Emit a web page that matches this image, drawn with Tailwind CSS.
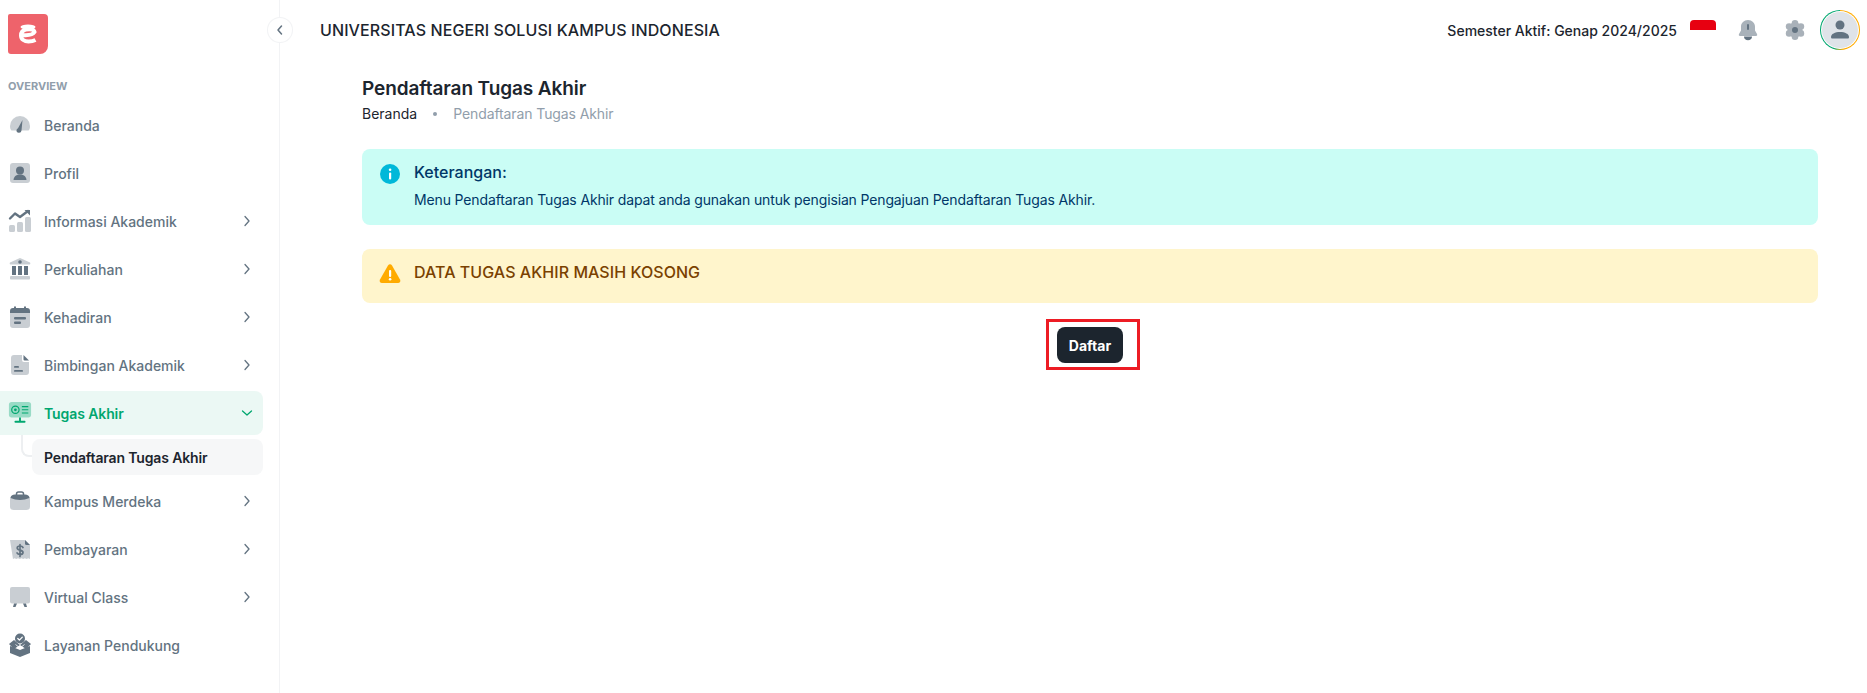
<!DOCTYPE html>
<html lang="en">
<head>
<meta charset="UTF-8" />
<title>Pendaftaran Tugas Akhir</title>
<script src="https://cdn.jsdelivr.net/npm/@tailwindcss/browser@4"></script>
</head>
<body class="bg-white font-['Inter',sans-serif] text-[#1c252e]">
<div class="flex h-[693px] w-[1867px] overflow-hidden">

  <!-- sidebar -->
  <aside class="relative w-[280px] shrink-0 border-r border-[#919eab1f] pt-[14px]">
    <div class="ml-[8px] h-[40px] w-[40px] rounded-tl-[2px] rounded-tr-[4px] rounded-br-[8px] rounded-bl-[3px] bg-[#ee636b]">
      <svg width="40" height="40" viewBox="0 0 40 40"><ellipse cx="20" cy="13" rx="7.500" ry="2.400" fill="#fff"/><path d="M14.500 21C20 21.500 25 20.500 26.500 18 26 15.500 22 15 18 15.500 14 16.500 13 19 13 21.500 13 25.500 16.500 27.500 20.500 27.500 23 27.500 25.500 27 27.500 26" fill="none" stroke="#fff" stroke-width="4"/></svg>
    </div>
    <div class="absolute top-[17px] right-[-14px] flex h-[26px] w-[26px] items-center justify-center rounded-full border border-[#919eab1f] bg-white">
      <svg width="12" height="12" viewBox="0 0 12 12" fill="none" stroke="#637381" stroke-width="1.500" stroke-linecap="round" stroke-linejoin="round"><path d="M7.500 2 4 6l3.500 4"/></svg>
    </div>
    <div class="mt-[25px] ml-[8px] h-[14px] text-[11px] leading-[14px] font-bold text-[#919eab]">OVERVIEW</div>

    <nav class="mt-[8px] flex flex-col text-[14px] font-medium text-[#637381]">
      <a class="flex h-[48px] items-center pl-[8px]">
        <svg class="mr-[12px] shrink-0" width="24" height="24" viewBox="0 0 24 24"><path d="M2 13a10 10 0 0 1 20 0c0 2-.5 4-1.500 4.500h-17C2.500 17 2 15 2 13z" fill="#637381" opacity=".35"/><path d="M14.500 7 13.500 17.500a2.500 2.500 0 1 1-5-.5c.2-.8.8-1.300 1.500-1.700z" fill="#637381"/></svg>
        <span>Beranda</span>
      </a>
      <a class="flex h-[48px] items-center pl-[8px]">
        <svg class="mr-[12px] shrink-0" width="24" height="24" viewBox="0 0 24 24"><rect x="2" y="2" width="20" height="20" rx="3" fill="#637381" opacity=".35"/><circle cx="12" cy="9.500" r="4" fill="#637381"/><path d="M5.500 19c.5-4 3-5.500 6.500-5.500s6 1.500 6.500 5.500z" fill="#637381"/></svg>
        <span>Profil</span>
      </a>
      <a class="flex h-[48px] items-center pl-[8px]">
        <svg class="mr-[12px] shrink-0" width="24" height="24" viewBox="0 0 24 24"><rect x="1" y="16" width="6" height="7" rx="1.500" fill="#637381" opacity=".35"/><rect x="9" y="13" width="6" height="10" rx="1.500" fill="#637381" opacity=".35"/><rect x="17" y="8" width="6" height="15" rx="1.500" fill="#637381" opacity=".35"/><path d="M2 9.500 7 4.500l5 3.500 8-6" fill="none" stroke="#637381" stroke-width="2.400" stroke-linecap="round" stroke-linejoin="round"/><path d="M16.500 1H22V6.500z" fill="#637381"/></svg>
        <span>Informasi Akademik</span>
        <svg class="mr-[26px] ml-auto" width="12" height="12" viewBox="0 0 12 12" fill="none" stroke="#637381" stroke-width="1.300" stroke-linecap="round" stroke-linejoin="round"><path d="m4 1.500 4 4.500-4 4.500"/></svg>
      </a>
      <a class="flex h-[48px] items-center pl-[8px]">
        <svg class="mr-[12px] shrink-0" width="24" height="24" viewBox="0 0 24 24"><path d="M12 1 22 5.500c.5.300.5 2-.5 2h-19c-1 0-1-1.700-.5-2z" fill="#637381" opacity=".35"/><circle cx="12" cy="5" r="1.800" fill="#637381"/><rect x="4" y="9" width="4" height="9" fill="#637381"/><rect x="10" y="9" width="4" height="9" fill="#637381"/><rect x="16" y="9" width="4" height="9" fill="#637381"/><rect x="2" y="19" width="20" height="3.500" rx="1" fill="#637381" opacity=".35"/></svg>
        <span>Perkuliahan</span>
        <svg class="mr-[26px] ml-auto" width="12" height="12" viewBox="0 0 12 12" fill="none" stroke="#637381" stroke-width="1.300" stroke-linecap="round" stroke-linejoin="round"><path d="m4 1.500 4 4.500-4 4.500"/></svg>
      </a>
      <a class="flex h-[48px] items-center pl-[8px]">
        <svg class="mr-[12px] shrink-0" width="24" height="24" viewBox="0 0 24 24"><path d="M2 8h20v12a3 3 0 0 1-3 3H5a3 3 0 0 1-3-3z" fill="#637381" opacity=".35"/><path d="M2 8V6a3 3 0 0 1 3-3h1V1.500h2V3h8V1.500h2V3h1a3 3 0 0 1 3 3v2z" fill="#637381"/><rect x="6" y="12" width="12" height="2.500" rx="1" fill="#637381"/><rect x="6" y="16.500" width="7" height="2.500" rx="1" fill="#637381"/></svg>
        <span>Kehadiran</span>
        <svg class="mr-[26px] ml-auto" width="12" height="12" viewBox="0 0 12 12" fill="none" stroke="#637381" stroke-width="1.300" stroke-linecap="round" stroke-linejoin="round"><path d="m4 1.500 4 4.500-4 4.500"/></svg>
      </a>
      <a class="flex h-[48px] items-center pl-[8px]">
        <svg class="mr-[12px] shrink-0" width="24" height="24" viewBox="0 0 24 24"><path d="M6 2h8v5a2 2 0 0 0 2 2h5v10a3 3 0 0 1-3 3H6a3 3 0 0 1-3-3V5a3 3 0 0 1 3-3z" fill="#637381" opacity=".35"/><path d="M15.500 2 21 7.500h-4.500a1 1 0 0 1-1-1z" fill="#637381"/><rect x="6" y="13" width="5" height="1.800" rx=".9" fill="#637381"/><rect x="6" y="17" width="9" height="1.800" rx=".9" fill="#637381"/></svg>
        <span>Bimbingan Akademik</span>
        <svg class="mr-[26px] ml-auto" width="12" height="12" viewBox="0 0 12 12" fill="none" stroke="#637381" stroke-width="1.300" stroke-linecap="round" stroke-linejoin="round"><path d="m4 1.500 4 4.500-4 4.500"/></svg>
      </a>

      <a class="mt-[2px] flex h-[44px] w-[263px] items-center rounded-r-[8px] bg-[#00a76f14] pl-[8px] font-semibold tracking-[-0.1px] text-[#00a76f]">
        <svg class="mr-[12px] shrink-0" width="24" height="24" viewBox="0 0 26 26"><rect x="1" y="1" width="24" height="17" rx="3" fill="#00a76f" opacity=".35"/><circle cx="8" cy="9.500" r="4" fill="none" stroke="#00a76f" stroke-width="1.300"/><circle cx="8" cy="9.500" r="1.500" fill="#00a76f"/><path d="M15 6h7M15 9.500h7M15 13h7" stroke="#00a76f" stroke-width="1.300"/><path d="M13 18v4" stroke="#00a76f" stroke-width="2"/><rect x="7" y="21.500" width="12" height="2" rx="1" fill="#00a76f"/></svg>
        <span>Tugas Akhir</span>
        <svg class="mr-[10px] ml-auto" width="12" height="12" viewBox="0 0 12 12" fill="none" stroke="#00a76f" stroke-width="1.300" stroke-linecap="round" stroke-linejoin="round"><path d="m1.500 4 4.500 4 4.500-4"/></svg>
      </a>
      <div class="relative mt-[4px] mb-[2px] ml-[32px] flex h-[36px] w-[231px] items-center rounded-[8px] bg-[#919eab14] pl-[12px] font-semibold tracking-[-0.15px] text-[#1c252e]">
        <span class="absolute top-[-4px] left-[-11px] h-[22px] w-[11px] rounded-bl-[8px] border-b-2 border-l-2 border-[#edeff1]"></span>
        Pendaftaran Tugas Akhir
      </div>

      <a class="flex h-[48px] items-center pl-[8px]">
        <svg class="mr-[12px] shrink-0" width="24" height="24" viewBox="0 0 24 24"><rect x="2" y="7" width="20" height="14" rx="3.500" fill="#637381" opacity=".35"/><path d="M8.500 6V5a2 2 0 0 1 2-2h3a2 2 0 0 1 2 2v1" fill="none" stroke="#637381" stroke-width="1.500"/><path d="M2.500 9c0-2 2-3.500 4.500-3.500h10c2.500 0 4.500 1.500 4.500 3.500-6 2.500-13 2.500-19 0z" fill="#637381"/></svg>
        <span>Kampus Merdeka</span>
        <svg class="mr-[26px] ml-auto" width="12" height="12" viewBox="0 0 12 12" fill="none" stroke="#637381" stroke-width="1.300" stroke-linecap="round" stroke-linejoin="round"><path d="m4 1.500 4 4.500-4 4.500"/></svg>
      </a>
      <a class="flex h-[48px] items-center pl-[8px]">
        <svg class="mr-[12px] shrink-0" width="24" height="24" viewBox="0 0 24 24"><path d="M2 3h15l5 5v14l-1.700-.8-1.700.8-1.700-.8-1.700.8-1.700-.8-1.800.8-1.700-.8-1.700.8-1.700-.8-1.600.8z" fill="#637381" opacity=".35"/><path d="M17 3 22 8h-3.500a1.500 1.500 0 0 1-1.500-1.500z" fill="#637381"/><path d="M15 10.500c-.5-1-1.500-1.500-3-1.500-1.800 0-2.800.8-2.800 2 0 2.800 5.800 1.400 5.800 4.400 0 1.200-1.100 2-3 2-1.500 0-2.500-.5-3-1.500M12 7.500v12" fill="none" stroke="#637381" stroke-width="1.700" stroke-linecap="round"/></svg>
        <span>Pembayaran</span>
        <svg class="mr-[26px] ml-auto" width="12" height="12" viewBox="0 0 12 12" fill="none" stroke="#637381" stroke-width="1.300" stroke-linecap="round" stroke-linejoin="round"><path d="m4 1.500 4 4.500-4 4.500"/></svg>
      </a>
      <a class="flex h-[48px] items-center pl-[8px]">
        <svg class="mr-[12px] shrink-0" width="24" height="24" viewBox="0 0 24 24"><rect x="2" y="2" width="20" height="16.500" rx="2" fill="#637381" opacity=".35"/><path d="M6 18.500h3L7.500 22H5zM15 18.500h3l1 3.500h-2.500z" fill="#637381"/></svg>
        <span>Virtual Class</span>
        <svg class="mr-[26px] ml-auto" width="12" height="12" viewBox="0 0 12 12" fill="none" stroke="#637381" stroke-width="1.300" stroke-linecap="round" stroke-linejoin="round"><path d="m4 1.500 4 4.500-4 4.500"/></svg>
      </a>
      <a class="flex h-[48px] items-center pl-[8px]">
        <svg class="mr-[12px] shrink-0" width="24" height="24" viewBox="0 0 24 24"><path d="M2 13 12 17l10-4v7l-10 4-10-4z" fill="#637381"/><path d="M1 11 6 7l6 5-6 4zM23 11l-5-4-6 5 6 4z" fill="#637381"/><path d="M7.500 11.500 12 15l4.500-3.500" fill="none" stroke="#fff" stroke-width=".8"/><circle cx="12" cy="5.500" r="5" fill="#637381"/><path d="m9.800 5.500 1.600 1.600 2.900-3" fill="none" stroke="#fff" stroke-width="1.300" stroke-linecap="round" stroke-linejoin="round"/></svg>
        <span>Layanan Pendukung</span>
      </a>
    </nav>
  </aside>

  <div class="flex min-w-0 flex-1 flex-col">
    <!-- topbar -->
    <header class="flex h-[60px] items-center pr-[7px] pl-[40px]">
      <div class="text-[16px] font-medium tracking-[0.1px]">UNIVERSITAS NEGERI SOLUSI KAMPUS INDONESIA</div>
      <div class="ml-auto text-[14px] font-medium">Semester Aktif: Genap 2024/2025</div>
      <div class="ml-[13px] h-[20px] w-[26px] overflow-hidden rounded-[4px]">
        <div class="h-[10px] bg-[#e70011]"></div>
      </div>
      <svg class="ml-[20px]" width="24" height="24" viewBox="0 0 24 24"><path d="M12 2c-4 0-7 3-7 6.500v4l-2 3.500c-.5 1 0 2 1 2h16c1 0 1.500-1 1-2l-2-3.500v-4C19 5 16 2 12 2z" fill="#637381" opacity=".55"/><path d="M8 18.500h8c0 2.500-1.800 3.700-4 3.700s-4-1.200-4-3.700z" fill="#637381"/><rect x="11" y="6" width="2" height="6" rx="1" fill="#637381"/></svg>
      <svg class="ml-[23px]" width="24" height="24" viewBox="0 0 24 24"><g fill="#637381" opacity=".55"><circle cx="12" cy="12" r="7.500"/><circle cx="12" cy="5.200" r="3.300"/><circle cx="17.900" cy="8.600" r="3.300"/><circle cx="17.900" cy="15.400" r="3.300"/><circle cx="12" cy="18.800" r="3.300"/><circle cx="6.100" cy="15.400" r="3.300"/><circle cx="6.100" cy="8.600" r="3.300"/></g><circle cx="12" cy="12" r="3" fill="#637381"/></svg>
      <div class="ml-[13px] flex h-[40px] w-[40px] items-center justify-center rounded-full bg-[conic-gradient(#ffab00_0deg,#ffab00_170deg,#00a76f_200deg,#00a76f_360deg)] p-[1px]">
        <div class="flex h-full w-full items-center justify-center rounded-full bg-white p-[1px]">
          <div class="flex h-full w-full items-center justify-center rounded-full bg-[#dfe3e8]">
            <svg width="24" height="24" viewBox="0 0 24 24"><circle cx="12" cy="7" r="4.500" fill="#637381"/><path d="M3 19c0-3 4-5 9-5s9 2 9 5c0 1-.5 1.500-1.500 1.500h-15C3.500 20.500 3 20 3 19z" fill="#637381"/></svg>
          </div>
        </div>
      </div>
    </header>

    <!-- content -->
    <main class="flex flex-col pt-[15px] pr-[49px] pl-[82px]">
      <h1 class="h-[28px] text-[19px] leading-[28px] font-semibold tracking-[-0.1px]">Pendaftaran Tugas Akhir</h1>
      <div class="flex h-[22px] items-center text-[14px] leading-[22px]">
        <span>Beranda</span>
        <span class="mx-[16px] h-[4px] w-[4px] rounded-full bg-[#919eab]"></span>
        <span class="tracking-[-0.1px] text-[#919eab]">Pendaftaran Tugas Akhir</span>
      </div>

      <div class="mt-[24px] flex h-[76px] rounded-[8px] bg-[#cafdf5] pt-[12px] pl-[16px] text-[#003768]">
        <svg class="mt-[1px] mr-[12px] shrink-0" width="24" height="24" viewBox="0 0 24 24"><circle cx="12" cy="12" r="10" fill="#00b8d9"/><rect x="11" y="10.500" width="2.200" height="7" rx="1" fill="#fff"/><circle cx="12.100" cy="7.800" r="1.300" fill="#fff"/></svg>
        <div>
          <div class="h-[22px] text-[16px] leading-[22px] font-medium">Keterangan:</div>
          <div class="mt-[6px] text-[14px] leading-[22px] tracking-[-0.14px]">Menu Pendaftaran Tugas Akhir dapat anda gunakan untuk pengisian Pengajuan Pendaftaran Tugas Akhir.</div>
        </div>
      </div>

      <div class="mt-[24px] flex h-[54px] rounded-[8px] bg-[#fff5cc] pt-[12px] pl-[16px] text-[#7a4100]">
        <svg class="mt-[1px] mr-[12px] shrink-0" width="24" height="24" viewBox="0 0 24 24"><path d="M10 3.500c1-1.700 3-1.700 4 0l8 14c1 1.800-.2 3.500-2 3.500H4c-1.800 0-3-1.700-2-3.500z" fill="#ffab00"/><rect x="11" y="8" width="2.200" height="7" rx="1" fill="#fff"/><circle cx="12.100" cy="17.300" r="1.300" fill="#fff"/></svg>
        <div class="h-[22px] text-[16px] leading-[22px] font-medium tracking-[0.05px]">DATA TUGAS AKHIR MASIH KOSONG</div>
      </div>

      <div class="mt-[16px] flex justify-center">
        <div class="ml-[6px] flex h-[51px] w-[94px] items-start border-[3px] border-[#ed1c24] pt-[5px] pl-[8px]">
          <button class="h-[36px] w-[66px] rounded-[8px] bg-[#1c252e] text-[14px] font-bold text-white">Daftar</button>
        </div>
      </div>
    </main>
  </div>
</div>
</body>
</html>
